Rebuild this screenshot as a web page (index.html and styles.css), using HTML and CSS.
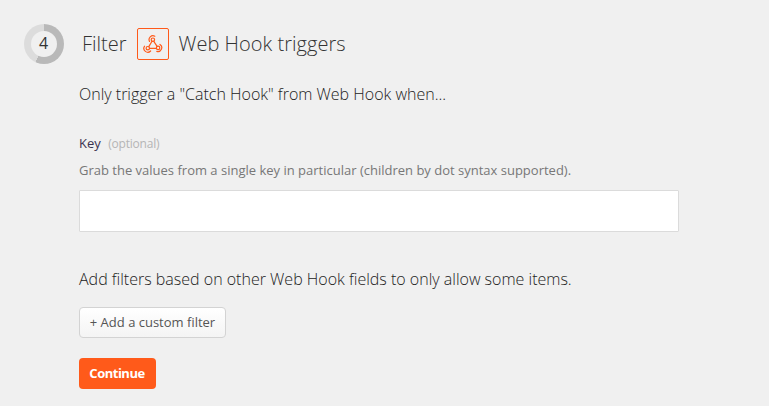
FILE: index.html
```html
<!DOCTYPE html>
<html lang="en">
<head>
<meta charset="utf-8">
<title>Filter Web Hook triggers</title>
<link rel="stylesheet" href="styles.css">
</head>
<body>
<main class="step">
  <header class="head">
    <div class="progress"><span class="number">4</span></div>
    <h1 class="title">
      <span class="word">Filter</span>
      <span class="app-icon">
        <svg viewBox="0 0 20 20" width="20" height="20" fill="none" stroke="#ff5a1a" stroke-width="1.2" stroke-linecap="round">
          <circle cx="9.9" cy="5.7" r="1.7"/>
          <circle cx="4.8" cy="14.2" r="1.7"/>
          <circle cx="15.1" cy="13.9" r="1.7"/>
          <path d="M9 7.3 5.8 12.6M10.8 7.3l3.3 5.1M6.6 14.3h6.7"/>
          <path d="M6.5 7.4A3.9 3.9 0 0 1 11.8 2.2M1.5 12.2A3.9 3.9 0 0 0 7.6 17M17 10.4A3.9 3.9 0 0 1 13.8 17.4"/>
        </svg>
      </span>
      <span class="word name">Web Hook triggers</span>
    </h1>
  </header>
  <section class="body">
    <p class="lead">Only trigger a "Catch Hook" from Web Hook when...</p>
    <label class="label" for="key">Key <span class="optional">(optional)</span></label>
    <p class="help">Grab the values from a single key in particular (children by dot syntax supported).</p>
    <input class="field" id="key" type="text">
    <p class="lead more">Add filters based on other Web Hook fields to only allow some items.</p>
    <button class="btn add" type="button">+ Add a custom filter</button>
    <button class="btn continue" type="button">Continue</button>
  </section>
</main>
</body>
</html>
```
FILE: styles.css
```css
* { box-sizing: border-box; }
body {
  margin: 0;
  height: 406px;
  overflow: hidden;
  background: #f0f0f0;
  color: #333;
  font-family: "Open Sans", sans-serif;
}
p, h1 { margin: 0; }
.head { display: flex; align-items: center; padding: 24px 0 0 24px; height: 64px; }
.progress {
  display: grid;
  place-items: center;
  width: 40px;
  height: 40px;
  border-radius: 50%;
  background: conic-gradient(#b9b9b9 0 205deg, #dcdcdc 205deg);
}
.number {
  width: 26px;
  height: 26px;
  border-radius: 50%;
  background: #f0f0f0;
  color: #333;
  font-size: 16px;
  line-height: 25px;
  padding-right: 1px;
  text-align: center;
}
.title {
  display: flex;
  align-items: center;
  margin-left: 18px;
  font-size: 20px;
  font-weight: 300;
  line-height: 32px;
}
.name { letter-spacing: 0.03px; }
.app-icon {
  display: grid;
  place-items: center;
  width: 32px;
  height: 32px;
  margin: 0 10px;
  border: 1px solid #ff5a1a;
  border-radius: 2px;
}
.body { display: flex; flex-direction: column; align-items: flex-start; padding: 18px 0 0 79px; }
.lead { color: #222; font-size: 16px; font-weight: 300; line-height: 24px; white-space: nowrap; }
.label { margin-top: 27px; color: #3b3350; font-size: 13px; line-height: 20px; }
.optional { margin-left: 4px; color: #b5b5b5; font-size: 12px; letter-spacing: -0.2px; }
.help { margin-top: 6px; color: #777; font-size: 13px; line-height: 20px; }
.field { width: 600px; height: 42px; margin-top: 10px; border: 1px solid #dbdbdb; border-radius: 1px; background: #fff; }
.more { margin-top: 35px; }
.btn { height: 31px; padding: 0; border: 0; border-radius: 4px; font: 13px/29px "Open Sans", sans-serif; }
.add { width: 147px; margin-top: 16px; border: 1px solid #d3d3d3; background: linear-gradient(#fff, #f4f4f4); color: #555; }
.continue { width: 77px; margin-top: 20px; padding-right: 1px; background: #ff5a1a; color: #fff; font-weight: 700; letter-spacing: -0.5px; }
```
